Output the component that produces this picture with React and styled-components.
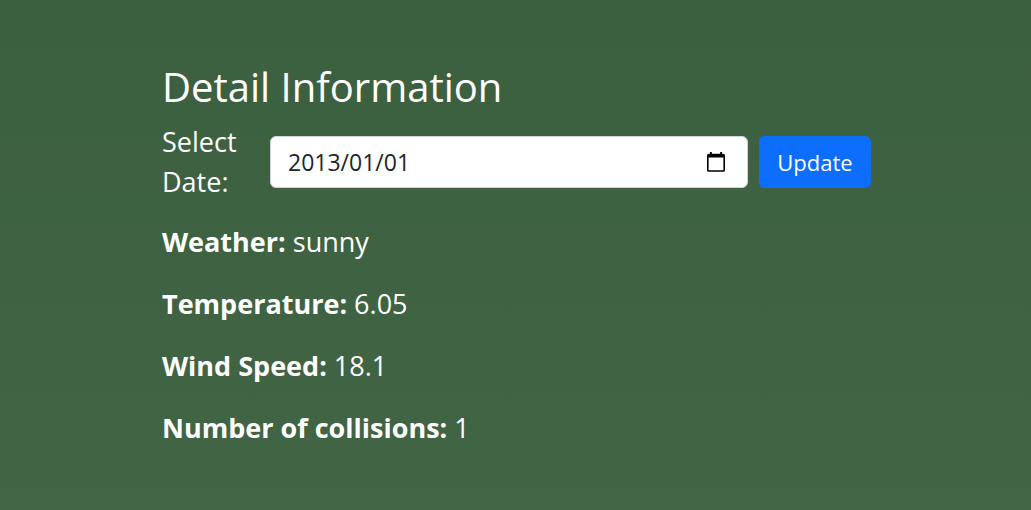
import React, { useState } from "react";
import styled, { createGlobalStyle } from "styled-components";

const GlobalStyle = createGlobalStyle`
  * { box-sizing: border-box; }
  body {
    margin: 0;
    min-height: 100vh;
    background: linear-gradient(#3b603f, #426545);
    color: #fff;
    font-family: "Segoe UI", "Open Sans", sans-serif;
    font-size: 27px;
    line-height: 40px;
  }
`;

const Panel = styled.main`
  margin: 0 160px 0 162px;
  padding: 60px 0;
`;

const Title = styled.h1`
  margin: 0 0 8px;
  font-size: 40px;
  font-weight: 400;
  line-height: 54px;
`;

const DateForm = styled.form`
  display: flex;
  align-items: center;
  margin-bottom: 20px;
`;

const DateLabel = styled.label`
  flex: 0 0 108px;
  padding-right: 24px;
`;

const Field = styled.div`
  flex: 1;
  display: flex;
  align-items: center;
  height: 52px;
  padding: 0 22px 0 17px;
  background: #fff;
  border: 1px solid #ced4da;
  border-radius: 6px;
  color: #212529;
`;

const DateInput = styled.input`
  flex: 1;
  min-width: 0;
  padding: 0;
  border: 0;
  outline: 0;
  background: transparent;
  color: inherit;
  font-family: inherit;
  font-size: 23px;
  line-height: 34px;
`;

const UpdateButton = styled.button`
  min-width: 112px;
  height: 52px;
  margin-left: 11px;
  padding: 0 16px;
  border: 0;
  border-radius: 6px;
  background: #0d6efd;
  color: #fff;
  font-family: inherit;
  font-size: 22px;
  cursor: pointer;
`;

const Detail = styled.p`
  margin: 0 0 22px;
`;

const details = [
  ["Weather", "sunny"],
  ["Temperature", "6.05"],
  ["Wind Speed", "18.1"],
  ["Number of collisions", "1"],
];

function CalendarIcon() {
  return (
    <svg width="18" height="20" viewBox="0 0 18 20" fill="#000" aria-hidden="true">
      <path
        fillRule="evenodd"
        d="M3 0h1.8v1.8h8.4V0H15v1.8h1.4A1.6 1.6 0 0 1 18 3.4v14.8a1.6 1.6 0 0 1-1.6 1.6H1.6A1.6 1.6 0 0 1 0 18.2V3.4a1.6 1.6 0 0 1 1.6-1.6H3zM1.6 5.6v12.6h14.8V5.6z"
      />
    </svg>
  );
}

export default function App() {
  const [date, setDate] = useState("2013/01/01");
  return (
    <>
      <GlobalStyle />
      <Panel>
        <Title>Detail Information</Title>
        <DateForm onSubmit={(e) => e.preventDefault()}>
          <DateLabel htmlFor="date">Select Date:</DateLabel>
          <Field>
            <DateInput id="date" type="text" value={date} onChange={(e) => setDate(e.target.value)} />
            <CalendarIcon />
          </Field>
          <UpdateButton type="submit">Update</UpdateButton>
        </DateForm>
        {details.map(([name, value]) => (
          <Detail key={name}>
            <strong>{name}:</strong> {value}
          </Detail>
        ))}
      </Panel>
    </>
  );
}
